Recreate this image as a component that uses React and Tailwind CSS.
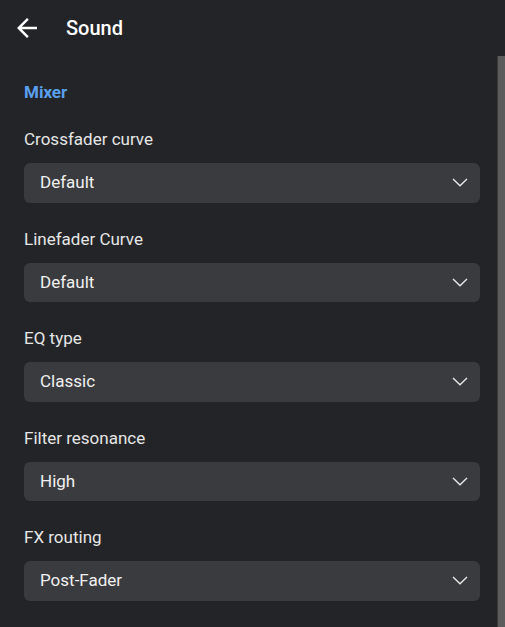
import { useState } from "react";

const settings = [
  { label: "Crossfader curve", value: "Default" },
  { label: "Linefader Curve", value: "Default" },
  { label: "EQ type", value: "Classic" },
  { label: "Filter resonance", value: "High" },
  { label: "FX routing", value: "Post-Fader" },
];

function Chevron() {
  return (
    <svg width="16" height="9" viewBox="0 0 16 9" fill="none" className="shrink-0">
      <polyline points="1,1 8,7.8 15,1" stroke="#e8e8e8" strokeWidth="1.4" />
    </svg>
  );
}

function SelectRow({ label, value }) {
  return (
    <div>
      <div className="text-[17px] leading-5 text-[#e6e6e6] mb-[14px]">{label}</div>
      {/* fake select box */}
      <div className="h-[39.5px] rounded-[6px] bg-[#3a3b3e] flex items-center justify-between pl-4 pr-[12px]">
        <span className="text-[17px] text-[#f0f0f0]">{value}</span>
        <Chevron />
      </div>
    </div>
  );
}

export default function App() {
  const [rows] = useState(settings);
  return (
    <div className="w-[505px] h-[627px] bg-[#232427] flex flex-col overflow-hidden" style={{ fontFamily: "Roboto, 'Noto Sans', sans-serif" }}>
      {/* header */}
      <div className="h-14 flex items-center shrink-0">
        <svg width="30" height="30" viewBox="0 0 24 24" className="ml-3" fill="#ffffff">
          <path d="M20 11H7.83l5.59-5.59L12 4l-8 8 8 8 1.41-1.41L7.83 13H20v-2z" />
        </svg>
        <span className="ml-[24px] text-[20px] font-medium text-white">Sound</span>
      </div>

      <div className="flex flex-1 min-h-0">
        <div className="flex-1 pl-6 pr-[17px] pt-[26px]">
          <div className="text-[17px] leading-5 font-bold text-[#5aa0ef]">Mixer</div>
          <div className="mt-[27px] flex flex-col gap-[26px]">
            {rows.map((r) => (
              <SelectRow key={r.label} label={r.label} value={r.value} />
            ))}
          </div>
        </div>
        {/* scrollbar */}
        <div className="w-2 bg-[#5c5c5c] border-l border-[#3b3b3b]" />
      </div>
    </div>
  );
}
